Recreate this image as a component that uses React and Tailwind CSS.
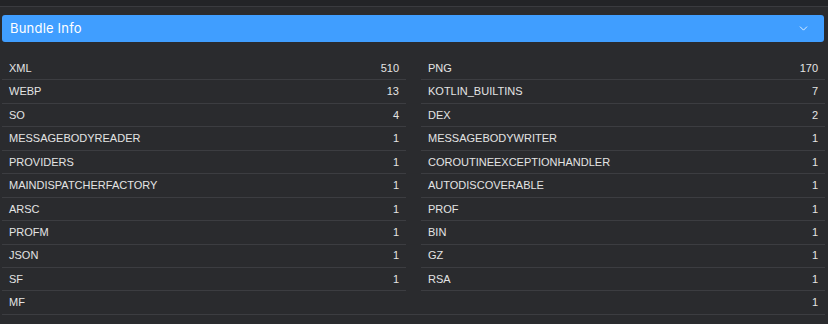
import { ChevronDown } from 'lucide-react';

const items = [
  ['XML', 510], ['PNG', 170],
  ['WEBP', 13], ['KOTLIN_BUILTINS', 7],
  ['SO', 4], ['DEX', 2],
  ['MESSAGEBODYREADER', 1], ['MESSAGEBODYWRITER', 1],
  ['PROVIDERS', 1], ['COROUTINEEXCEPTIONHANDLER', 1],
  ['MAINDISPATCHERFACTORY', 1], ['AUTODISCOVERABLE', 1],
  ['ARSC', 1], ['PROF', 1],
  ['PROFM', 1], ['BIN', 1],
  ['JSON', 1], ['GZ', 1],
  ['SF', 1], ['RSA', 1],
  ['MF', 1],
];

export default function App() {
  return (
    <div className="w-[828px] h-[324px] overflow-hidden bg-[#2a2b2e] font-['Inter',sans-serif]">
      {/* previous section edge */}
      <div className="h-[7px] bg-[#232427] border-b border-[#3a3b3f]" />

      {/* Collapse header */}
      <div className="mt-[8px] mx-[2px] mr-[4px] h-[27px] rounded-[3px] bg-[#409eff] flex items-center justify-between pl-[8px] pr-[14px]">
        <span className="text-[13px] text-white tracking-[0.2px]">Bundle Info</span>
        <ChevronDown className="w-[13px] h-[13px] text-white" strokeWidth={1.5} />
      </div>

      {/* Items */}
      <div className="mt-[15px] pl-[2px] pr-[3px] grid grid-cols-2 gap-x-[15px]">
        {items.map(([name, count], i) => (
          <div
            key={name}
            className={
              'h-[23.45px] flex items-center justify-between border-b border-[#3c3d41] pl-[7px] pr-[7px] text-[11px] text-[#e4e4e4] font-["Liberation_Sans",sans-serif] ' +
              (i === items.length - 1 ? 'col-span-2' : '')
            }
          >
            <span>{name}</span>
            <span>{count}</span>
          </div>
        ))}
      </div>
    </div>
  );
}
